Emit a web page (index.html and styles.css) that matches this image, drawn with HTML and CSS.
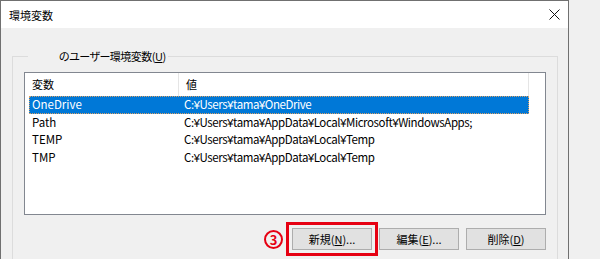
FILE: index.html
```html
<!DOCTYPE html>
<html lang="ja">
<head>
    <meta charset="UTF-8">
    <title>環境変数</title>
    <link rel="stylesheet" href="styles.css">
</head>
<body>
    <div class="window">
        <div class="titlebar">
            <span class="title">環境変数</span>
            <svg class="close" width="11" height="11" viewBox="0 0 11 11">
                <path d="M0.5 0.5L10.5 10.5M10.5 0.5L0.5 10.5" stroke="#111" stroke-width="1"/>
            </svg>
        </div>
        <div class="dialog-body">
            <fieldset class="group">
                <legend>のユーザー環境変数(<u>U</u>)</legend>
                <div class="listview">
                    <div class="list-header">
                        <div class="col-name">変数</div>
                        <div class="col-value">値</div>
                    </div>
                    <div class="list-row selected">
                        <div class="cell-name">OneDrive</div>
                        <div class="cell-value">C:<span class="yen">¥</span>Users<span class="yen">¥</span>tama<span class="yen">¥</span>OneDrive</div>
                    </div>
                    <div class="list-row">
                        <div class="cell-name">Path</div>
                        <div class="cell-value">C:<span class="yen">¥</span>Users<span class="yen">¥</span>tama<span class="yen">¥</span>AppData<span class="yen">¥</span>Local<span class="yen">¥</span>Microsoft<span class="yen">¥</span>WindowsApps;</div>
                    </div>
                    <div class="list-row">
                        <div class="cell-name">TEMP</div>
                        <div class="cell-value">C:<span class="yen">¥</span>Users<span class="yen">¥</span>tama<span class="yen">¥</span>AppData<span class="yen">¥</span>Local<span class="yen">¥</span>Temp</div>
                    </div>
                    <div class="list-row">
                        <div class="cell-name">TMP</div>
                        <div class="cell-value">C:<span class="yen">¥</span>Users<span class="yen">¥</span>tama<span class="yen">¥</span>AppData<span class="yen">¥</span>Local<span class="yen">¥</span>Temp</div>
                    </div>
                </div>
                <div class="button-row">
                    <span class="step-mark">3</span>
                    <div class="highlight">
                        <button>新規(<u>N</u>)...</button>
                    </div>
                    <button>編集(<u>E</u>)...</button>
                    <button>削除(<u>D</u>)</button>
                </div>
            </fieldset>
        </div>
    </div>
</body>
</html>
```

FILE: styles.css
```css
html, body {
    margin: 0;
    height: 259px;
    overflow: hidden;
}
body {
    background: #f0f0f0;
    font-family: "Noto Sans CJK JP", "Noto Sans", sans-serif;
    font-size: 12px;
    color: #000;
}
.window {
    box-sizing: border-box;
    width: 569px;
    height: 259px;
    overflow: hidden;
    border: 1px solid #707070;
    border-bottom: none;
    background: #f0f0f0;
}
.titlebar {
    height: 27px;
    background: #fff;
    display: flex;
    align-items: center;
    justify-content: space-between;
    padding: 0 8px;
}
.title {
    font-size: 11px;
    line-height: 16px;
}
.close {
    display: block;
}
.dialog-body {
    padding: 20px 10px 0 11px;
}
.group {
    margin: 0;
    padding: 8px 11px 20px 11px;
    border: 1px solid #dcdcdc;
    min-width: 0;
}
.group legend {
    margin-left: 4px;
    padding: 0 2px 0 31px;
    font-size: 11px;
    line-height: 16px;
    letter-spacing: -0.5px;
    font-feature-settings: "palt";
}
.listview {
    height: 143px;
    box-sizing: border-box;
    border: 1px solid #828790;
    background: #fff;
}
.list-header {
    display: flex;
    height: 23px;
    font-size: 11px;
}
.col-name, .col-value {
    box-sizing: border-box;
    line-height: 23px;
    border-right: 1px solid #e5e5e5;
}
.col-name {
    width: 154px;
    padding-left: 7px;
}
.col-value {
    width: 350px;
    padding-left: 7px;
}
.list-row {
    display: flex;
    height: 17.5px;
    line-height: 17.5px;
    margin-left: 4px;
    width: 500px;
    box-sizing: border-box;
    font-size: 11.5px;
}
.list-row.selected {
    background: #0078d7;
    color: #fff;
    outline: 1px dotted #d9a066;
    outline-offset: -1px;
}
.cell-name {
    width: 147px;
    padding-left: 3px;
}
.cell-value {
    padding-left: 5px;
    white-space: nowrap;
    letter-spacing: -0.4px;
}
.yen {
    font-family: "Liberation Sans", sans-serif;
    font-size: 11px;
}
.button-row {
    display: flex;
    justify-content: flex-end;
    align-items: center;
    gap: 7px;
    margin-top: 13px;
}
.button-row button {
    width: 80px;
    height: 22px;
    padding: 0;
    background: #e1e1e1;
    border: 1px solid #adadad;
    font-family: "Noto Sans CJK JP", "Noto Sans", sans-serif;
    font-size: 11px;
    color: #000;
}
.highlight {
    border: 3px solid #e60012;
    padding: 3px;
    margin: -6px;
    display: flex;
}
.step-mark {
    box-sizing: border-box;
    width: 19px;
    height: 19px;
    border: 2px solid #e60012;
    border-radius: 50%;
    color: #e60012;
    font-weight: bold;
    font-size: 13px;
    line-height: 15px;
    text-align: center;
    margin-right: 2px;
}
```
